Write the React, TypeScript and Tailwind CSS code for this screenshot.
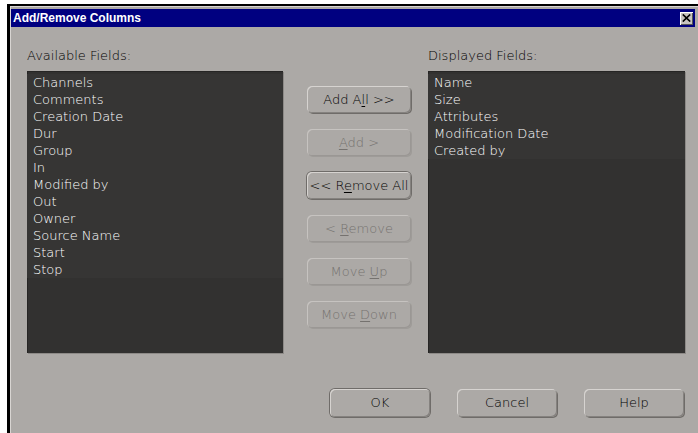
import type { ReactNode } from 'react';

const available = [
  'Channels',
  'Comments',
  'Creation Date',
  'Dur',
  'Group',
  'In',
  'Modified by',
  'Out',
  'Owner',
  'Source Name',
  'Start',
  'Stop',
];

const displayed = ['Name', 'Size', 'Attributes', 'Modification Date', 'Created by'];

function FieldList({ label, items }: { label: string; items: string[] }) {
  return (
    <div className="flex flex-col">
      <div className="mt-[21px] h-[16px] leading-[16px] text-[13px] text-black">{label}</div>
      {/* list box */}
      <div className="mt-[7px] h-[282px] bg-[#323130] shadow-[inset_1px_1px_0_#262524,1px_1px_0_#8d8a87] pt-[3px]">
        <div className="bg-[#363534]">
          {items.map((item) => (
            <div key={item} className="pl-[6px] leading-[17px] h-[17px] text-[13px] text-white">
              {item}
            </div>
          ))}
        </div>
      </div>
    </div>
  );
}

function Btn({ children, disabled, focused, w = 'w-[104px]', h = 'h-[27px]' }: { children: ReactNode; disabled?: boolean; focused?: boolean; w?: string; h?: string }) {
  return (
    <button
      className={`${w} ${h} rounded-[5px] text-[13px] flex items-center justify-center bg-[#aca9a6] ${
        disabled
          ? 'text-[#75726f] shadow-[inset_1px_1px_0_#c6c3c0,inset_-1px_-1px_0_#9a9794,1px_1px_0_#9e9b98]'
          : focused
          ? 'text-black shadow-[inset_1px_1px_0_#d6d3d0,inset_-1px_-1px_0_#85827f,0_0_0_1px_#6f6c69]'
          : 'text-black shadow-[inset_1px_1px_0_#d6d3d0,inset_-1px_-1px_0_#85827f,1px_1px_0_#6f6c69]'
      }`}
    >
      <span className="whitespace-pre">{children}</span>
    </button>
  );
}

export default function App() {
  return (
    <div
      className="w-[698px] h-[433px] bg-white overflow-hidden font-extralight"
      style={{ fontFamily: '"DejaVu Sans", "Liberation Sans", sans-serif' }}
    >
      {/* window frame */}
      <div className="ml-[7px] mt-[4px] h-[429px] border-l-[3px] border-t-[2px] border-black bg-[#aca9a6]">
        <div className="h-full border-l border-t border-[#d8d5d2] pt-[2px] flex flex-col">
          {/* title bar */}
          <div className="mr-[3px] h-[18px] bg-[#000080] flex items-center justify-between">
            <span
              className="pl-[2px] text-[12px] font-bold text-white leading-[18px]"
              style={{ fontFamily: '"Liberation Sans", Arial, sans-serif' }}
            >
              Add/Remove Columns
            </span>
            <span className="mr-[2px] w-[13px] h-[13px] bg-[#c6c3c0] shadow-[inset_1px_1px_0_#fff,inset_-1px_-1px_0_#555] flex items-center justify-center">
              <svg width="9" height="8" viewBox="0 0 9 8">
                <path d="M0.8 0.5 L8.2 7.5 M8.2 0.5 L0.8 7.5" stroke="#000" strokeWidth="1.7" />
              </svg>
            </span>
          </div>

          {/* fields */}
          <div className="flex pl-[16px]">
            <div className="w-[256px]">
              <FieldList label="Available Fields:" items={available} />
            </div>
            <div className="ml-[24px] w-[104px] pt-[59px] flex flex-col gap-[16px]">
              <Btn>
                Add A<u className="underline-offset-2">l</u>l &gt;&gt;
              </Btn>
              <Btn disabled>
                <u className="underline-offset-2">A</u>dd &gt;
              </Btn>
              <Btn focused>
                &lt;&lt; R<u className="underline-offset-2">e</u>move All
              </Btn>
              <Btn disabled>
                &lt; <u className="underline-offset-2">R</u>emove
              </Btn>
              <Btn disabled>
                Move <u className="underline-offset-2">U</u>p
              </Btn>
              <Btn disabled>
                Move <u className="underline-offset-2">D</u>own
              </Btn>
            </div>
            <div className="ml-[17px] w-[257px]">
              <FieldList label="Displayed Fields:" items={displayed} />
            </div>
          </div>

          {/* dialog buttons */}
          <div className="flex mt-[36px] ml-[319px] gap-[27px]">
            <Btn focused w="w-[100px]" h="h-[28px]">OK</Btn>
            <Btn w="w-[100px]" h="h-[28px]">Cancel</Btn>
            <Btn w="w-[100px]" h="h-[28px]">Help</Btn>
          </div>
        </div>
      </div>
    </div>
  );
}
